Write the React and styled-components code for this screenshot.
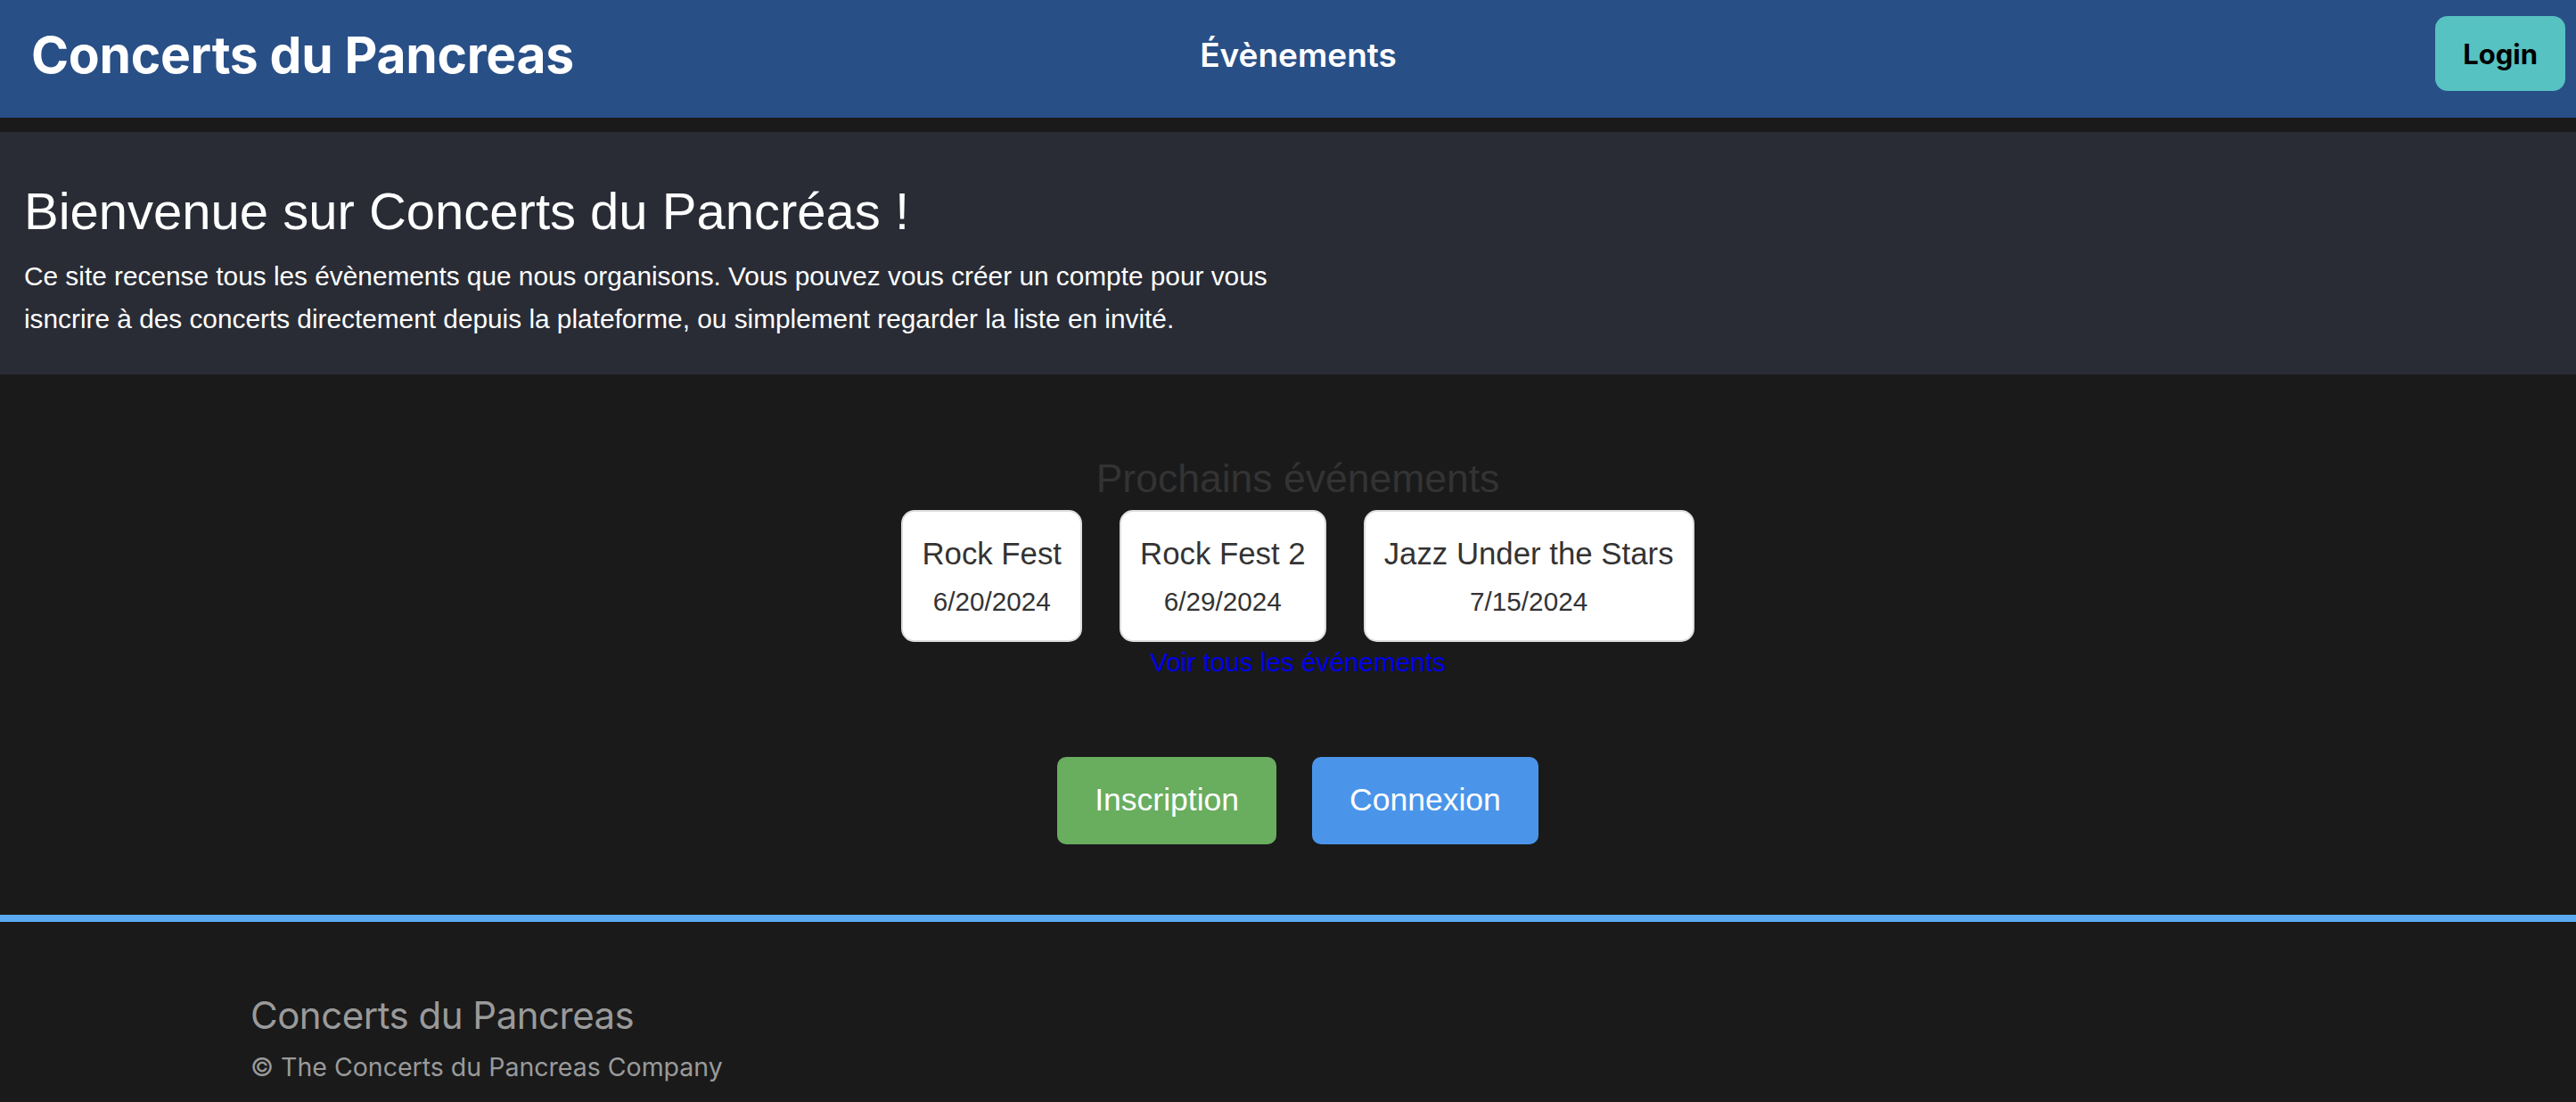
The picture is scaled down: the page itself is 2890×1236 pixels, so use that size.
import React from "react";
import styled, { createGlobalStyle } from "styled-components";

const GlobalStyle = createGlobalStyle`
  html, body {
    margin: 0;
    padding: 0;
    background-color: #1a1a1a;
  }
  body {
    font-family: "Liberation Sans", Arial, sans-serif;
  }
  * {
    box-sizing: border-box;
  }
`;

const Page = styled.div`
  min-height: 1236px;
  background-color: #1a1a1a;
`;

const Header = styled.header`
  height: 132px;
  background-color: #294f87;
  display: grid;
  grid-template-columns: 1fr auto 1fr;
  align-items: center;
  padding: 0 12px 10px 35px;
  font-family: Inter, "Noto Sans", sans-serif;
`;

const Brand = styled.h1`
  margin: 0;
  font-size: 57px;
  font-weight: 700;
  color: #ffffff;
  letter-spacing: -0.3px;
`;

const NavLink = styled.a`
  font-size: 37px;
  font-weight: 600;
  color: #ffffff;
  text-decoration: none;
`;

const LoginButton = styled.button`
  justify-self: end;
  align-self: start;
  margin-top: 18px;
  height: 84px;
  padding: 0 31px;
  border: none;
  border-radius: 14px;
  background-color: #56c2c1;
  color: #000000;
  font-family: Inter, "Noto Sans", sans-serif;
  font-size: 31px;
  font-weight: 700;
  cursor: pointer;
`;

const Hero = styled.section`
  margin-top: 16px;
  height: 272px;
  background-color: #292c35;
  padding: 56px 27px 0;
  color: #ffffff;
`;

const HeroTitle = styled.h2`
  margin: 0 0 15px;
  font-size: 58px;
  font-weight: 400;
  line-height: 1.15;
`;

const HeroText = styled.p`
  margin: 0;
  max-width: 1445px;
  font-size: 29.8px;
  line-height: 48px;
`;

const Main = styled.main`
  display: flex;
  flex-direction: column;
  align-items: center;
  padding: 91px 0 0 22px;
  height: 606px;
`;

const SectionTitle = styled.h3`
  margin: 0 0 10px;
  font-size: 44.5px;
  font-weight: 400;
  color: #333333;
  line-height: 1.15;
`;

const EventList = styled.div`
  display: flex;
  gap: 42px;
`;

const EventCard = styled.div`
  background-color: #ffffff;
  border: 2px solid #dddddd;
  border-radius: 15px;
  padding: 27px 21px 26px;
  display: flex;
  flex-direction: column;
  align-items: center;
  gap: 17px;
  color: #333333;
`;

const EventName = styled.span`
  font-size: 34.8px;
  line-height: 1.15;
`;

const EventDate = styled.span`
  font-size: 29.7px;
  line-height: 1.15;
`;

const AllEventsLink = styled.a`
  margin-top: 6px;
  font-size: 29.7px;
  color: #0000ee;
  text-decoration: none;
  line-height: 1.15;
`;

const Actions = styled.div`
  display: flex;
  gap: 40px;
  margin-top: 88px;
`;

const ActionButton = styled.button`
  height: 98px;
  padding: 0 42px;
  border: none;
  border-radius: 10px;
  background-color: ${(p) => (p.$variant === "primary" ? "#4a95ea" : "#69ad5f")};
  color: #ffffff;
  font-family: "Liberation Sans", Arial, sans-serif;
  font-size: 35.5px;
  cursor: pointer;
`;

const Footer = styled.footer`
  border-top: 8px solid #59aaf1;
  padding: 80px 0 0 281px;
  font-family: Inter, "Noto Sans", sans-serif;
  color: #9a9a9a;
`;

const FooterTitle = styled.div`
  font-size: 42px;
  line-height: 1.2;
  letter-spacing: -0.5px;
`;

const FooterCopy = styled.div`
  margin-top: 16px;
  font-size: 28.5px;
  line-height: 1.2;
`;

const events = [
  { name: "Rock Fest", date: "6/20/2024" },
  { name: "Rock Fest 2", date: "6/29/2024" },
  { name: "Jazz Under the Stars", date: "7/15/2024" },
];

const App = () => {
  return (
    <Page>
      <GlobalStyle />
      <Header>
        <Brand>Concerts du Pancreas</Brand>
        <NavLink href="#">Évènements</NavLink>
        <LoginButton>Login</LoginButton>
      </Header>
      <Hero>
        <HeroTitle>Bienvenue sur Concerts du Pancréas !</HeroTitle>
        <HeroText>
          Ce site recense tous les évènements que nous organisons. Vous pouvez vous créer un compte pour vous
          isncrire à des concerts directement depuis la plateforme, ou simplement regarder la liste en invité.
        </HeroText>
      </Hero>
      <Main>
        <SectionTitle>Prochains événements</SectionTitle>
        <EventList>
          {events.map((ev, index) => (
            <EventCard key={index}>
              <EventName>{ev.name}</EventName>
              <EventDate>{ev.date}</EventDate>
            </EventCard>
          ))}
        </EventList>
        <AllEventsLink href="#">Voir tous les événements</AllEventsLink>
        <Actions>
          <ActionButton>Inscription</ActionButton>
          <ActionButton $variant="primary">Connexion</ActionButton>
        </Actions>
      </Main>
      <Footer>
        <FooterTitle>Concerts du Pancreas</FooterTitle>
        <FooterCopy>© The Concerts du Pancreas Company</FooterCopy>
      </Footer>
    </Page>
  );
};

export default App;
